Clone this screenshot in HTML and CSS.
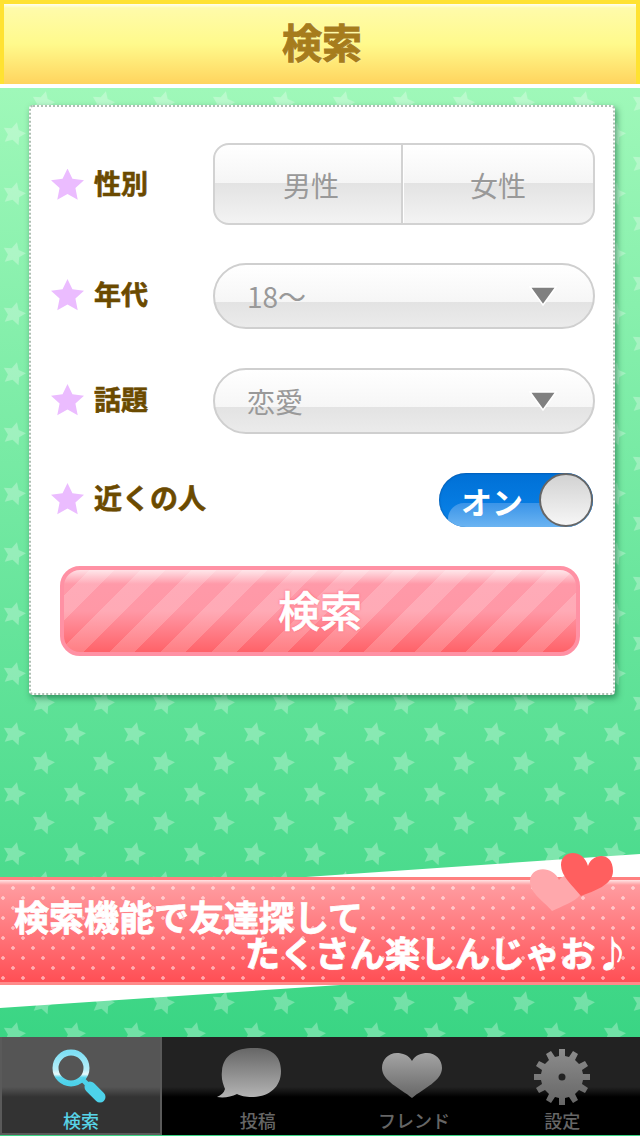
FILE: index.html
```html
<!DOCTYPE html>
<html lang="ja">

<head>
    <meta charset="UTF-8" />
    <meta name="viewport" content="width=device-width, initial-scale=1" />
    <title>検索</title>
    <link rel="stylesheet" href="styles.css">
</head>

<body>
    <div class="app">
        <header class="top-bar">
            <h1>検索</h1>
        </header>

        <main class="content">
            <form class="card">
                <div class="row row-gender">
                    <div class="row-label"><span class="star"></span><span class="label-text">性別</span></div>
                    <div class="segment">
                        <button type="button" class="segment-item segment-male">男性</button>
                        <button type="button" class="segment-item">女性</button>
                    </div>
                </div>

                <div class="row row-select">
                    <div class="row-label"><span class="star"></span><span class="label-text">年代</span></div>
                    <button type="button" class="select">
                        <span>18～</span>
                        <svg class="select-arrow" viewBox="0 0 28 20"><polygon points="1,1 27,1 14,19" fill="#808080" stroke="#fff" stroke-width="1.5" /></svg>
                    </button>
                </div>

                <div class="row row-select">
                    <div class="row-label"><span class="star"></span><span class="label-text">話題</span></div>
                    <button type="button" class="select">
                        <span>恋愛</span>
                        <svg class="select-arrow" viewBox="0 0 28 20"><polygon points="1,1 27,1 14,19" fill="#808080" stroke="#fff" stroke-width="1.5" /></svg>
                    </button>
                </div>

                <div class="row row-toggle">
                    <div class="row-label"><span class="star"></span><span class="label-text">近くの人</span></div>
                    <div class="toggle">
                        <span class="toggle-text">オン</span>
                        <span class="toggle-knob"></span>
                    </div>
                </div>

                <button type="button" class="search-btn"><span>検索</span></button>
            </form>

            <section class="promo">
                <svg class="promo-ribbons" viewBox="0 853 640 156">
                    <polygon points="306,877 640,854 640,877" fill="#fff" />
                    <polygon points="0,985 340,985 0,1008" fill="#fff" />
                </svg>
                <div class="promo-band">
                    <p class="promo-line">検索機能で友達探して</p>
                    <p class="promo-line promo-line-right">たくさん楽しんじゃお♪</p>
                </div>
                <svg class="promo-hearts" viewBox="530 853 84 59">
                    <path d="M559 880 C566 870 580 880 580 895 C575 902 562 906 552 911 C545 902 530 894 530 881 C530 866 553 865 559 880 Z" fill="#ffa8ac" />
                    <path d="M588 866 C592 853 613 851 613 871 C613 885 594 891 581 896 C572 885 561 876 561 865 C561 850 583 848 588 866 Z" fill="#ff5f5f" />
                </svg>
            </section>
        </main>

        <nav class="tab-bar">
            <a class="tab tab-active">
                <svg class="tab-icon" width="60" height="60" viewBox="0 0 60 60">
                    <defs>
                        <linearGradient id="lensGrad" x1="0" y1="0" x2="0" y2="1">
                            <stop offset="0" stop-color="#7fe0f5" />
                            <stop offset="0.55" stop-color="#b8eef8" />
                            <stop offset="0.7" stop-color="#e8fafc" />
                            <stop offset="0.8" stop-color="#5cd6ec" />
                            <stop offset="1" stop-color="#4dd2ea" />
                        </linearGradient>
                    </defs>
                    <circle cx="20" cy="21" r="15.500" fill="none" stroke="url(#lensGrad)" stroke-width="6" />
                    <line x1="31" y1="32" x2="38" y2="39" stroke="#4dd2ea" stroke-width="5" />
                    <line x1="39" y1="40" x2="49" y2="50" stroke="#4dd2ea" stroke-width="11" stroke-linecap="round" />
                </svg>
                <span>検索</span>
            </a>
            <a class="tab tab-post">
                <svg class="tab-icon" width="66" height="60" viewBox="0 4 66 60">
                    <defs>
                        <linearGradient id="bubbleGrad" x1="0" y1="0" x2="0" y2="1">
                            <stop offset="0" stop-color="#666" />
                            <stop offset="1" stop-color="#b4b4b4" />
                        </linearGradient>
                    </defs>
                    <path d="M38 5 C55 5 65 12 65 28 C65 45 52 54 36 54 C29 54 25 53 21 51 C15 54 8 55 1 54 C5 52 8 50 9 46 C7 41 5 36 6 28 C7 12 20 5 38 5 Z" fill="url(#bubbleGrad)" />
                </svg>
                <span>投稿</span>
            </a>
            <a class="tab tab-friend">
                <svg class="tab-icon" width="62" height="60" viewBox="0 -1 62 60">
                    <defs>
                        <linearGradient id="heartGrad" x1="0" y1="0" x2="0" y2="1">
                            <stop offset="0" stop-color="#a4a4a4" />
                            <stop offset="1" stop-color="#666" />
                        </linearGradient>
                    </defs>
                    <path d="M31 13 C34 7 41 5 46 5 C55 5 61 12 61 20 C61 33 43 40 31 50 C19 40 1 33 1 20 C1 12 7 5 16 5 C21 5 28 7 31 13 Z" fill="url(#heartGrad)" />
                </svg>
                <span>フレンド</span>
            </a>
            <a class="tab tab-settings">
                <svg class="tab-icon" width="60" height="60" viewBox="0 0 60 60">
                    <defs>
                        <linearGradient id="gearGrad" x1="0" y1="0" x2="0" y2="1">
                            <stop offset="0" stop-color="#8c8c8c" />
                            <stop offset="1" stop-color="#666" />
                        </linearGradient>
                    </defs>
                    <path fill="url(#gearGrad)" fill-rule="evenodd" d="M27 2 H33 V9 L37 10 L41 4 L46 7 L43 13 L47 17 L53 14 L56 19 L50 23 L51 27 H58 V33 H51 L50 37 L56 41 L53 46 L47 43 L43 47 L46 53 L41 56 L37 50 L33 51 V58 H27 V51 L23 50 L19 56 L14 53 L17 47 L13 43 L7 46 L4 41 L10 37 L9 33 H2 V27 H9 L10 23 L4 19 L7 14 L13 17 L17 13 L14 7 L19 4 L23 10 L27 9 Z M30 26.500 A3.500 3.500 0 1 0 30 33.500 A3.500 3.500 0 1 0 30 26.500 Z" />
                </svg>
                <span>設定</span>
            </a>
        </nav>
    </div>
</body>

</html>
```

FILE: styles.css
```css
* {
    box-sizing: border-box;
}

body {
    margin: 0;
    font-family: "Noto Sans CJK JP", "Noto Sans", sans-serif;
    background-color: #3ad584;
}

button {
    font-family: inherit;
    padding: 0;
    margin: 0;
}

.app {
    display: flex;
    flex-direction: column;
    height: 1136px;
    overflow: hidden;
}

/* top title bar */
.top-bar {
    flex: none;
    height: 84px;
    border: 4px solid #ffe232;
    border-bottom: none;
    background: linear-gradient(#fffef0 0, #fffbaa 4px, #fffa8c 50%, #ffd45e 100%);
    display: flex;
    align-items: center;
    justify-content: center;
}

.top-bar h1 {
    margin: 0 0 6px 4px;
    font-size: 40px;
    line-height: 1;
    font-weight: 700;
    color: #a67c1c;
    -webkit-text-stroke: 1px #a67c1c;
    text-shadow: 0 0 2px #fff;
}

/* star tile lines up with the top of the window */
.content {
    flex: 1;
    padding-top: 17px;
    border-top: 4px solid #fff;
    background-color: #3ad584;
    background-image:
        url("data:image/svg+xml;charset=US-ASCII,%3Csvg xmlns='http://www.w3.org/2000/svg' width='60' height='60'%3E%3Cg fill='%23fff' fill-opacity='0.28'%3E%3Cpolygon transform='translate(14 14) rotate(14)' points='0,-12 3.600,-4.900 11.400,-3.700 5.800,1.900 7.100,9.700 0,6 -7.100,9.700 -5.800,1.900 -11.400,-3.700 -3.600,-4.900'/%3E%3Cpolygon transform='translate(43 43) rotate(14)' points='0,-12 3.600,-4.900 11.400,-3.700 5.800,1.900 7.100,9.700 0,6 -7.100,9.700 -5.800,1.900 -11.400,-3.700 -3.600,-4.900'/%3E%3C/g%3E%3C/svg%3E"),
        linear-gradient(#9ff8b9, #3ad584);
    background-repeat: repeat, no-repeat;
    background-position: 0 -28px, 0 0;
}

/* form card */
.card {
    width: 586px;
    height: 590px;
    margin-left: 29px;
    padding: 36px 18px 0 20px;
    background: #fff;
    border: 2px dotted #aebfb3;
    border-radius: 4px;
    box-shadow: 2px 3px 6px rgba(0, 70, 40, 0.5);
    display: flex;
    flex-direction: column;
    gap: 39px;
}

.row {
    display: flex;
    align-items: center;
    justify-content: space-between;
}

.row-gender {
    height: 81px;
}

.row-select {
    height: 66px;
}

.row-toggle {
    height: 54px;
    padding-right: 2px;
}

.row-label {
    display: flex;
    align-items: center;
    gap: 10px;
    margin-top: -2px;
    font-size: 27px;
    font-weight: 700;
    color: #6b4a00;
    -webkit-text-stroke: 0.6px #6b4a00;
}

.row-gender .row-label {
    margin-top: 2px;
}

.label-text {
    margin-bottom: 4px;
}

.star {
    width: 33px;
    height: 32px;
    background: #ebbcff;
    clip-path: polygon(50% 0, 65% 32%, 100% 37%, 74% 61%, 81% 98%, 50% 80%, 19% 98%, 26% 61%, 0 37%, 35% 32%);
}

.row-toggle .row-label {
    font-size: 28px;
}

/* gender switch */
.segment {
    width: 382px;
    height: 82px;
    display: flex;
    border: 2px solid #d2d2d2;
    border-radius: 16px;
    overflow: hidden;
    background: linear-gradient(#fff, #f5f5f5 49%, #e3e3e3 49%, #f3f3f3);
}

.segment-item {
    flex: 1;
    border: none;
    background: none;
    font-size: 28px;
    color: #999;
    padding-top: 2px;
}

.segment-male {
    flex: none;
    width: 188px;
    padding-left: 6px;
    border-right: 2px solid #d2d2d2;
    box-shadow: 1px 0 0 #fff;
}

/* drop downs */
.select {
    width: 382px;
    height: 66px;
    display: flex;
    align-items: center;
    justify-content: space-between;
    padding: 0 36px 0 32px;
    border: 2px solid #cfcfcf;
    border-radius: 33px;
    background: linear-gradient(#fff, #f6f6f6 60%, #e3e3e3 60%, #ebebeb);
    font-size: 28px;
    color: #999;
}

.select span {
    line-height: 1;
}

.select-arrow {
    width: 28px;
    height: 20px;
    margin-top: -1px;
}

/* on / off */
.toggle {
    position: relative;
    width: 154px;
    height: 54px;
    border-radius: 27px;
    overflow: hidden;
    background: linear-gradient(#0070d6, #0a84ea);
    box-shadow: inset 0 0 2px rgba(0, 30, 80, 0.6);
    display: flex;
    align-items: center;
    justify-content: space-between;
    padding-left: 22px;
}

.toggle::before {
    content: "";
    position: absolute;
    left: 9px;
    right: 0;
    top: 30px;
    bottom: 0;
    border-top-left-radius: 16px;
    background: linear-gradient(#3a94e8, #6bb4f2);
}

.toggle-text {
    position: relative;
    font-size: 31px;
    font-weight: 700;
    line-height: 1;
    color: #fff;
}

.toggle-knob {
    position: relative;
    width: 54px;
    height: 54px;
    border-radius: 50%;
    border: 2px solid #666;
    background: linear-gradient(#d2d2d2, #f6f6f6);
}

/* big pink button */
.search-btn {
    align-self: flex-start;
    width: 520px;
    height: 90px;
    margin-left: 9px;
    padding-bottom: 4px;
    border: 4px solid #ff91a4;
    border-radius: 20px;
    overflow: hidden;
    background:
        linear-gradient(rgba(255, 255, 255, 0.7), rgba(255, 255, 255, 0) 14px),
        repeating-linear-gradient(135deg, rgba(255, 255, 255, 0) 0, rgba(255, 255, 255, 0) 18px, rgba(255, 255, 255, 0.18) 18px, rgba(255, 255, 255, 0.18) 36px),
        linear-gradient(#ff9aaa 0, #ff98a6 50%, #ff6268 100%);
}

.search-btn span {
    font-size: 42px;
    font-weight: 500;
    line-height: 1;
    color: #fff;
    -webkit-text-stroke: 0.6px #fff;
    text-shadow: 0 0 3px #ff6f80, 0 0 2px #ff6f80;
}

/* campaign strip */
.promo {
    position: relative;
    height: 108px;
    margin-top: 182px;
}

.promo-ribbons {
    position: absolute;
    top: -24px;
    left: 0;
    width: 640px;
    height: 156px;
}

.promo-band {
    position: relative;
    height: 108px;
    display: flex;
    flex-direction: column;
    padding-top: 18px;
    border-top: 3px solid #ff8080;
    border-bottom: 3px solid #ff8a8a;
    background-image:
        radial-gradient(circle, rgba(255, 255, 255, 0.5) 1.5px, rgba(255, 255, 255, 0) 2px),
        radial-gradient(circle, rgba(255, 255, 255, 0.5) 1.5px, rgba(255, 255, 255, 0) 2px),
        linear-gradient(#ffe4e4 0, #ff9ca0 5px, #ff4f55 100%);
    background-size: 20px 20px, 20px 20px, 100% 100%;
    background-position: 3px -2px, -7px 8px, 0 0;
}

.promo-line {
    margin: 0 0 0 14px;
    font-size: 35px;
    line-height: 36px;
    font-weight: 700;
    color: #fff;
    -webkit-text-stroke: 0.8px #fff;
    text-shadow: 0 0 2px #ff7a80;
    white-space: nowrap;
}

.promo-line-right {
    align-self: flex-end;
    margin: 0 10px 0 0;
}

.promo-hearts {
    position: absolute;
    top: -24px;
    right: 26px;
    width: 84px;
    height: 59px;
}

/* bottom tabs */
.tab-bar {
    flex: none;
    height: 99px;
    display: grid;
    grid-template-columns: 162px 1fr 1fr 1fr;
    border-bottom: 1px solid #3ad584;
    background: linear-gradient(#222 0, #222 50px, #000 60px);
}

.tab {
    display: flex;
    flex-direction: column;
    align-items: center;
    height: 98px;
    font-size: 18px;
    font-weight: 500;
    line-height: 24px;
    color: #666;
}

.tab-icon {
    display: block;
    height: 60px;
    margin-top: 10px;
    margin-bottom: 1px;
}

.tab-active {
    color: #58d4e8;
    background: linear-gradient(#555 0, #555 50px, #333 60px);
    border: 2px solid #5a5a5a;
    border-top: none;
}

.tab-post {
    padding-left: 32px;
}

.tab-post .tab-icon {
    margin-left: -18px;
}

.tab-friend {
    padding-left: 26px;
}

.tab-friend .tab-icon {
    margin-left: -4px;
}

.tab-settings {
    padding-left: 4px;
}
```
